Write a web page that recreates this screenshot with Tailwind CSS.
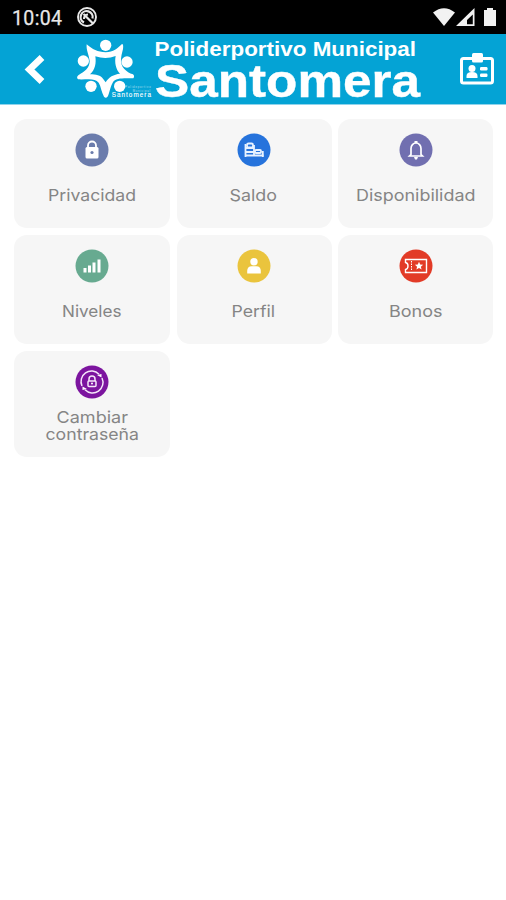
<!DOCTYPE html>
<html lang="es">
<head>
<meta charset="utf-8">
<meta name="viewport" content="width=device-width, initial-scale=1">
<title>Santomera</title>
<script src="https://cdn.jsdelivr.net/npm/@tailwindcss/browser@4"></script>
</head>
<body class="h-[900px] w-[506px] overflow-hidden bg-white font-['Inter',sans-serif] text-[#858585]">
<div class="flex h-[34px] items-center bg-black pl-[12px] pr-[8px] text-[#e8e8e8]">
  <svg class="h-[34px] w-[52px]" viewBox="0 0 52 34"><text x="0" y="25" font-family="Roboto, sans-serif" font-size="19.5" textLength="50" fill="currentColor" stroke="currentColor" stroke-width=".25">10:04</text></svg>
  <svg class="ml-[12px] h-[22px] w-[22px]" viewBox="0 0 22 22" fill="none" stroke="currentColor">
    <circle cx="11" cy="11" r="9" stroke-width="1.900"/><path d="M8 16.500A6 6 0 1 1 16.500 12.500" stroke-width="2.200"/><path d="M7.500 8 17 17.500M8 13q0-4 4-4.500" stroke-width="2.200"/>
  </svg>
  <svg class="ml-auto h-[20px] w-[65px]" viewBox="0 0 65 20" fill="#f2f2f2">
    <path d="M0 5.500Q11 -3 22 5.500L11 19Z"/>
    <path fill-rule="evenodd" d="M23 19 41.500 1V19ZM34 17.300H39.800V7.500L34 13Z"/>
    <path d="M51 3h3V1h6v2h3v16H51Z"/>
  </svg>
</div>
<header class="flex h-[71px] items-start border-b border-[#8fd3eb] bg-[#04a3d5]">
  <svg class="ml-[22px] mt-[20px] h-[32px] w-[26px]" viewBox="0 0 26 32" fill="none" stroke="#fff" stroke-width="6.800"><path d="M20 3.500 7.500 15.500l12.500 12"/></svg>
  <svg class="ml-[22px] h-[70px] w-[84px]" viewBox="0 0 252 210" fill="#fff">
    <circle cx="107" cy="34" r="17"/><circle cx="40" cy="81" r="17"/><circle cx="171" cy="84" r="17"/><circle cx="63" cy="157" r="17"/><circle cx="149" cy="157" r="17"/>
    <path fill-rule="evenodd" d="M50 31C67 46 83 54 107 55C130 54 143 43 156 30Q161 30 159 45Q154 63 153 75C150 98 169 115 189 121Q195 126 190 133C165 133 137 130 128 146C119 162 119 178 112 189Q107 194 102 188C94 174 93 157 86 146C74 130 48 138 24 136Q18 131 25 124C43 113 59 102 59 82C57 62 48 49 50 31ZM76 67C79 87 76 107 60 121C78 121 92 124 99 134L107 145C116 129 131 121 150 119C138 107 133 86 137 66Q108 78 76 67Z"/>
    <text x="125" y="190" font-family="'Liberation Sans', sans-serif" font-size="19" textLength="118" stroke="#fff" stroke-width=".3">Santomera</text>
    <g opacity=".65"><text x="166" y="162" font-family="'Liberation Sans', sans-serif" font-size="8" textLength="76">Polideportivo</text><text x="188" y="173" font-family="'Liberation Sans', sans-serif" font-size="8" textLength="52">Municipal</text></g>
  </svg>
  <div class="w-[270px] font-['Liberation_Sans',Arial,sans-serif] font-bold text-white">
    <svg class="block h-[26px] w-[270px]" viewBox="154 34 270 26" fill="#fff"><text x="154.500" y="56" font-size="19.500" textLength="261.500" lengthAdjust="spacingAndGlyphs">Poliderportivo Municipal</text></svg>
    <svg class="block h-[44px] w-[270px] overflow-visible" viewBox="154 60 270 44" fill="#fff" stroke="#fff"><text x="155" y="96.500" font-size="45.500" textLength="265" lengthAdjust="spacingAndGlyphs" stroke-width=".4">Santomera</text></svg>
  </div>
  <svg class="ml-[36px] mt-[19px] h-[33px] w-[35px]" viewBox="0 0 35 33" fill="#fff">
    <rect x="1.500" y="5.500" width="31" height="24.500" rx="2" fill="none" stroke="#fff" stroke-width="3"/>
    <rect x="12" y="0" width="11" height="9.500" rx="1.500"/>
    <circle cx="12" cy="15.500" r="3.500"/><path d="M6.500 25v-2q0-4 5.500-4t5.500 4v2Z"/>
    <rect x="20" y="14" width="7.500" height="3.500" rx="1.200"/><rect x="20" y="20.500" width="7.500" height="3.500" rx="1.200"/>
  </svg>
</header>
<main class="grid grid-cols-[156px_155px_155px] gap-x-[6.500px] gap-y-[7px] pl-[14px] pt-[13.500px] text-[16.500px]">
  <section class="flex h-[109px] flex-col items-center rounded-[13px] bg-[#f6f6f6] pt-[14px]">
    <svg class="h-[34px] w-[34px]" viewBox="0 0 34 34"><circle cx="17" cy="17" r="16.500" fill="#6b7cac"/><rect x="10.500" y="14" width="13" height="11.500" rx="1.500" fill="#fff"/><path d="M13 15v-2.500a4 4 0 0 1 8 0V15" fill="none" stroke="#fff" stroke-width="1.800"/><circle cx="17" cy="19.500" r="1.600" fill="#6b7cac"/></svg>
    <svg class="mt-[15px] h-[26px] w-[150px]" viewBox="0 0 150 26" fill="currentColor"><text x="31" y="18.500" textLength="88" lengthAdjust="spacingAndGlyphs">Privacidad</text></svg>
  </section>
  <section class="flex h-[109px] flex-col items-center rounded-[13px] bg-[#f6f6f6] pt-[14px]">
    <svg class="h-[34px] w-[34px]" viewBox="0 0 34 34"><circle cx="17" cy="17" r="16.500" fill="#2673dc"/><g fill="none" stroke="#e8f2ff" stroke-width="1.800"><rect x="10" y="10.500" width="6" height="4" rx="1.500"/><path d="M8.500 11v13M8.500 15h8.500M8.500 19h8.500M8.500 22.500h18M17 12v11"/><rect x="18" y="17" width="6" height="3" rx="1"/><path d="M25.800 18v6"/></g></svg>
    <svg class="mt-[15px] h-[26px] w-[150px]" viewBox="0 0 150 26" fill="currentColor"><text x="50.500" y="18.500" textLength="47.500" lengthAdjust="spacingAndGlyphs">Saldo</text></svg>
  </section>
  <section class="flex h-[109px] flex-col items-center rounded-[13px] bg-[#f6f6f6] pt-[14px]">
    <svg class="h-[34px] w-[34px]" viewBox="0 0 34 34"><circle cx="17" cy="17" r="16.500" fill="#716fb0"/><path d="M12 21.500v-6a5 5.500 0 0 1 10 0v6l1.500 1.500h-13Z" fill="none" stroke="#fff" stroke-width="1.700"/><path d="M15.500 8h3v2h-3ZM15 24h4l-1 2.500h-2Z" fill="#fff"/></svg>
    <svg class="mt-[15px] h-[26px] w-[150px]" viewBox="0 0 150 26" fill="currentColor"><text x="15" y="18.500" textLength="119.500" lengthAdjust="spacingAndGlyphs">Disponibilidad</text></svg>
  </section>
  <section class="flex h-[109px] flex-col items-center rounded-[13px] bg-[#f6f6f6] pt-[14px]">
    <svg class="h-[34px] w-[34px]" viewBox="0 0 34 34"><circle cx="17" cy="17" r="16.500" fill="#67aa90"/><path d="M8.500 19h3v4.500h-3ZM13 16.500h3v7h-3ZM17.500 13.500h3v10h-3ZM22.500 10.500h3v13h-3Z" fill="#fff"/></svg>
    <svg class="mt-[15px] h-[26px] w-[150px]" viewBox="0 0 150 26" fill="currentColor"><text x="45" y="18.500" textLength="59.500" lengthAdjust="spacingAndGlyphs">Niveles</text></svg>
  </section>
  <section class="flex h-[109px] flex-col items-center rounded-[13px] bg-[#f6f6f6] pt-[14px]">
    <svg class="h-[34px] w-[34px]" viewBox="0 0 34 34"><circle cx="17" cy="17" r="16.500" fill="#eac43d"/><circle cx="17" cy="12.800" r="3.700" fill="#fff"/><path d="M10.200 24.500V22q0-4.800 4.500-4.800h4.600q4.500 0 4.500 4.800v2.500Z" fill="#fff"/></svg>
    <svg class="mt-[15px] h-[26px] w-[150px]" viewBox="0 0 150 26" fill="currentColor"><text x="52.500" y="18.500" textLength="43.500" lengthAdjust="spacingAndGlyphs">Perfil</text></svg>
  </section>
  <section class="flex h-[109px] flex-col items-center rounded-[13px] bg-[#f6f6f6] pt-[14px]">
    <svg class="h-[34px] w-[34px]" viewBox="0 0 34 34"><circle cx="17" cy="17" r="16.500" fill="#e23b27"/><path d="M6.500 10.500h21v13h-21v-3q2.500-.5 2.500-3.500t-2.500-3.500Z" fill="none" stroke="#fff" stroke-width="1.400"/><path d="M12.500 12v10" stroke="#fff" stroke-width="1" stroke-dasharray="1.500 1"/><path d="m20 12.800 1.200 2.700 2.900.3-2.200 1.900.7 2.900-2.600-1.500-2.600 1.500.7-2.900-2.200-1.900 2.900-.3Z" fill="#fff"/></svg>
    <svg class="mt-[15px] h-[26px] w-[150px]" viewBox="0 0 150 26" fill="currentColor"><text x="48" y="18.500" textLength="53.500" lengthAdjust="spacingAndGlyphs">Bonos</text></svg>
  </section>
  <section class="flex h-[106px] flex-col items-center rounded-[13px] bg-[#f6f6f6] pt-[14px]">
    <svg class="h-[34px] w-[34px]" viewBox="0 0 34 34"><circle cx="17" cy="17" r="16.500" fill="#7c159f"/><g fill="none" stroke="#f5e6fa" stroke-width="1.500"><path d="M7 21A10.500 10.500 0 0 1 24 9.200M27 13A10.500 10.500 0 0 1 10 24.800"/><path d="M14 16v-2a3 3 0 0 1 6 0v2"/><rect x="13" y="16" width="8" height="5.500" rx="1"/></g><path d="m22 10 4.500-1v3.500ZM12 24l-4.500 1v-3.500Z" fill="#fff"/><circle cx="17" cy="18.500" r="1" fill="#fff"/></svg>
    <svg class="mt-[8px] h-[44px] w-[150px]" viewBox="0 0 150 44" fill="currentColor"><text x="39.500" y="15.500" textLength="71.500" lengthAdjust="spacingAndGlyphs">Cambiar</text><text x="28.500" y="32.500" textLength="93.500" lengthAdjust="spacingAndGlyphs">contraseña</text></svg>
  </section>
</main>
</body>
</html>
